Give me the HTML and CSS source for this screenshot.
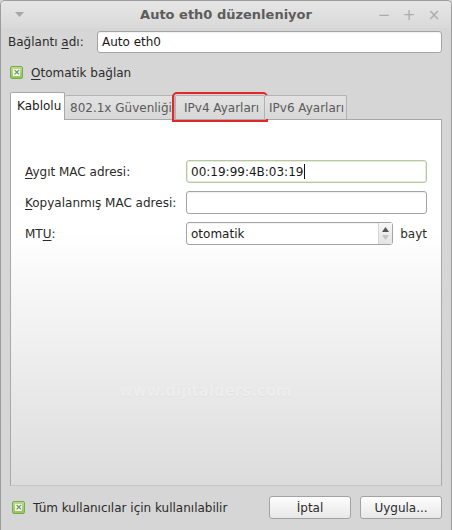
FILE: index.html
```html
<!DOCTYPE html>
<html lang="tr">
<head>
  <meta charset="UTF-8" />
  <title>Auto eth0 düzenleniyor</title>
  <link rel="stylesheet" href="styles.css">
</head>
<body>
  <div class="window">
    <!-- Title bar -->
    <div class="titlebar">
      <svg class="menu-arrow" width="9" height="6" viewBox="0 0 9 6"><path d="M0 0h9L4.5 5z" fill="#a6a6a6"/></svg>
      <div class="title">Auto eth0 düzenleniyor</div>
      <div class="wm-buttons">
        <span class="wm-btn">&minus;</span>
        <span class="wm-btn">+</span>
        <span class="wm-btn">&times;</span>
      </div>
    </div>

    <div class="name-row">
      <label class="name-label">Bağlantı <u>a</u>dı:</label>
      <div class="entry name-entry">Auto eth0</div>
    </div>

    <div class="check-row">
      <span class="check"></span>
      <span><u>O</u>tomatik bağlan</span>
    </div>

    <div class="notebook">
      <div class="tabs">
        <div class="tab active tab-wired">Kablolu</div>
        <div class="tab tab-sec">802.1x Güvenliği</div>
        <div class="tab tab-ipv4">IPv4 Ayarları</div>
        <div class="tab tab-ipv6">IPv6 Ayarları</div>
      </div>
      <div class="panel">
        <div class="form">
          <div class="field">
            <label class="field-label"><u>A</u>ygıt MAC adresi:</label>
            <div class="entry focused">00:19:99:4B:03:19<span class="cursor"></span></div>
          </div>
          <div class="field">
            <label class="field-label"><u>K</u>opyalanmış MAC adresi:</label>
            <div class="entry"></div>
          </div>
          <div class="field">
            <label class="field-label">MT<u>U</u>:</label>
            <div class="spin-wrap">
              <div class="entry spin">
                <span class="spin-text">otomatik</span>
                <span class="spin-btns">
                  <svg width="7" height="5" viewBox="0 0 7 5"><path d="M0 5L3.5 0 7 5z" fill="#555"/></svg>
                  <svg width="7" height="5" viewBox="0 0 7 5"><path d="M0 0h7L3.5 5z" fill="#c4c4c4"/></svg>
                </span>
              </div>
              <span class="unit">bayt</span>
            </div>
          </div>
        </div>
        <div class="watermark">www.dijitalders.com</div>
      </div>
    </div>

    <div class="bottom-bar">
      <div class="check-row bottom-check">
        <span class="check"></span>
        <span>Tüm kullanıcılar için kullanılabilir</span>
      </div>
      <div class="actions">
        <button class="btn">İptal</button>
        <button class="btn">Uygula...</button>
      </div>
    </div>
  </div>
</body>
</html>
```

FILE: styles.css
```css
body {
  margin: 0;
  font-family: 'DejaVu Sans', sans-serif;
  font-size: 12px;
  color: #2b2b2b;
  background: #d6d6d6;
}

u {
  text-decoration-thickness: 1px;
  text-underline-offset: 2px;
}

.window {
  width: 452px;
  height: 530px;
  box-sizing: border-box;
  border: 1px solid #9c9c9c;
  border-bottom: none;
  border-radius: 5px 5px 0 0;
  background: #d6d6d6;
  display: flex;
  flex-direction: column;
  overflow: hidden;
}

/* Title bar */
.titlebar {
  height: 27px;
  flex: none;
  display: flex;
  align-items: center;
  position: relative;
  background: linear-gradient(#e6e6e6, #d9d9d9);
}

.menu-arrow {
  margin-left: 14px;
}

.title {
  position: absolute;
  left: 0;
  right: 0;
  text-align: center;
  font-size: 13px;
  font-weight: bold;
  color: #5c5c5c;
  pointer-events: none;
}

.wm-buttons {
  margin-left: auto;
  margin-right: 9px;
  display: flex;
  gap: 9px;
}

.wm-btn {
  width: 16px;
  text-align: center;
  font-size: 15px;
  color: #acacac;
}

/* Connection name */
.name-row {
  display: flex;
  align-items: center;
  margin: 3px 9px 0 7px;
  height: 22px;
  flex: none;
}

.name-label {
  width: 89px;
}

.entry {
  box-sizing: border-box;
  height: 22px;
  background: #fff;
  border: 1px solid #a4a4a4;
  border-radius: 3px;
  box-shadow: inset 0 1px 1px rgba(0, 0, 0, 0.06);
  padding: 0 4px;
  display: flex;
  align-items: center;
  color: #1a1a1a;
}

.name-entry {
  flex: 1;
}

.check-row {
  display: flex;
  align-items: center;
  gap: 8px;
  margin: 13px 0 0 9px;
  height: 13px;
  flex: none;
}

.check {
  width: 11px;
  height: 11px;
  border: 1px solid #7aa84b;
  border-radius: 2px;
  background: linear-gradient(#b8dc8e, #93c560);
  position: relative;
  flex: none;
}

.check::after {
  content: "×";
  position: absolute;
  left: 2px;
  top: 2px;
  width: 7px;
  height: 7px;
  background: #f4f8ee;
  color: #6f8f52;
  font-size: 9px;
  line-height: 7px;
  text-align: center;
  font-weight: bold;
}

/* Notebook */
.notebook {
  margin: 13px 9px 0 9px;
  display: flex;
  flex-direction: column;
  flex: none;
}

.tabs {
  display: flex;
  align-items: flex-end;
  height: 27px;
  position: relative;
  z-index: 1;
}

.tab {
  box-sizing: border-box;
  height: 24px;
  border: 1px solid #b2b2b2;
  border-bottom: none;
  border-radius: 2px 2px 0 0;
  background: linear-gradient(#e2e2e2, #d8d8d8);
  color: #5a5a5a;
  display: flex;
  align-items: center;
  white-space: nowrap;
  overflow: hidden;
}

.tab.active {
  height: 28px;
  margin-bottom: -1px;
  background: #fff;
  color: #1a1a1a;
  border-color: #a8a8a8;
  padding-bottom: 2px;
}

.tab-wired {
  width: 55px;
  padding-left: 6px;
}

.tab-sec {
  width: 110px;
  padding-left: 5px;
  border-left: none;
}

.tab-ipv4 {
  width: 90px;
  padding-left: 8px;
  outline: 2px solid #e2262a;
  outline-offset: 1px;
}

.tab-ipv6 {
  width: 82px;
  padding-left: 4px;
  border-left: none;
}

.panel {
  height: 367px;
  box-sizing: border-box;
  border: 1px solid #a8a8a8;
  border-bottom-color: #c6c6c6;
  background: linear-gradient(#fff 0%, #fff 30%, #dcdcdc 100%);
  display: flex;
  flex-direction: column;
}

.form {
  margin: 40px 14px 0 14px;
  display: flex;
  flex-direction: column;
  gap: 8px;
}

.field {
  display: flex;
  align-items: center;
  height: 23px;
}

.field-label {
  width: 161px;
}

.field .entry {
  flex: 1;
  height: 23px;
}

.entry.focused {
  border-color: #b7c6a4;
  box-shadow: inset 0 0 0 1px #e6eedb;
}

.cursor {
  display: inline-block;
  width: 1px;
  height: 15px;
  background: #111;
  margin-left: 1px;
}

.spin-wrap {
  flex: 1;
  display: flex;
  align-items: center;
}

.spin {
  padding-right: 0;
}

.spin-text {
  flex: 1;
}

.spin-btns {
  align-self: stretch;
  width: 13px;
  border-left: 1px solid #d4d4d4;
  background: linear-gradient(#f6f6f6, #e4e4e4);
  display: flex;
  flex-direction: column;
  align-items: center;
  justify-content: center;
  gap: 3px;
}

.unit {
  margin-left: 7px;
}

.watermark {
  margin: 137px 0 0 108px;
  font-size: 15px;
  font-weight: bold;
  color: #ededed;
  text-shadow: 0 1px 0 #e2e2e2;
}

/* Bottom bar */
.bottom-bar {
  display: flex;
  align-items: center;
  height: 43px;
  flex: none;
  padding: 0 9px 0 2px;
}

.bottom-check {
  margin: 0 0 0 9px;
}

.actions {
  margin-left: auto;
  display: flex;
  gap: 9px;
}

.btn {
  width: 82px;
  height: 23px;
  font-family: 'DejaVu Sans', sans-serif;
  font-size: 12px;
  color: #2b2b2b;
  border: 1px solid #a2a2a2;
  border-radius: 3px;
  background: linear-gradient(#fdfdfd, #e8e8e8);
  padding: 0;
}
```
